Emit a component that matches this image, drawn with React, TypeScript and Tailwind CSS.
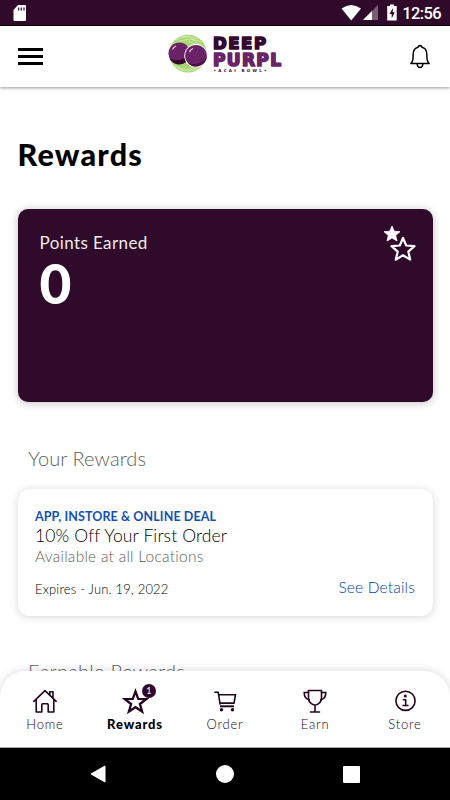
import React from "react";

interface NavItem {
  label: string;
  icon: React.ReactNode;
  active?: boolean;
  badge?: number;
}

const stroke = {
  fill: "none",
  stroke: "currentColor",
  strokeWidth: 1.6,
  strokeLinejoin: "round" as const,
  strokeLinecap: "round" as const,
};

function HomeIcon() {
  return (
    <svg width="28" height="28" viewBox="0 0 28 28" {...stroke}>
      <path d="M2.800 14.300L14 3.600l11.200 10.700M5.200 12.300V25h5.600v-7.300q0-.9.900-.9h4.600q.9 0 .9.900V25h5.600V12.300M18.800 7.800V4.800H22v6" />
    </svg>
  );
}

function StarIcon() {
  return (
    <svg width="28" height="28" viewBox="0 0 28 28" {...stroke} strokeWidth="2.300" strokeLinejoin="miter">
      <path d="M14.500 4.300l2.700 7.500 8 .3-6.300 4.900 2.200 7.500-6.600-4.300-6.600 4.300 2.200-7.500-6.300-4.900 8-.3z" />
    </svg>
  );
}

function CartIcon() {
  return (
    <svg width="28" height="28" viewBox="0 0 28 28" {...stroke} strokeLinejoin="miter" strokeLinecap="butt">
      <path d="M3.300 5.200h3.900l2 12.500M7.600 7.700h16.900l-1.500 8.400H9" />
      <path d="M9 19.300h14" strokeWidth="2" />
      <circle cx="10.500" cy="22.700" r="1.700" fill="currentColor" stroke="none" />
      <circle cx="21.500" cy="22.700" r="1.700" fill="currentColor" stroke="none" />
    </svg>
  );
}

function TrophyIcon() {
  return (
    <svg width="28" height="28" viewBox="0 0 28 28" {...stroke} strokeLinejoin="miter">
      <path d="M7.500 3.500h13v7c0 4-2.500 6.800-6.500 7.800-4-1-6.500-3.800-6.500-7.800zM14 18.500V25M9.500 25h9" />
      <path d="M7.500 5.500H3.200c0 4 1.300 6.500 5 7.300M20.500 5.500h4.300c0 4-1.300 6.500-5 7.300" />
    </svg>
  );
}

function InfoIcon() {
  return (
    <svg width="28" height="28" viewBox="0 0 28 28" {...stroke} strokeLinecap="butt">
      <circle cx="14.500" cy="13.800" r="9.600" />
      <path d="M11.800 12.700h2.900v5.600M11.500 18.500h6" />
      <circle cx="14.300" cy="9" r="1.500" fill="currentColor" stroke="none" />
    </svg>
  );
}

const navItems: NavItem[] = [
  { label: "Home", icon: <HomeIcon /> },
  { label: "Rewards", icon: <StarIcon />, active: true, badge: 1 },
  { label: "Order", icon: <CartIcon /> },
  { label: "Earn", icon: <TrophyIcon /> },
  { label: "Store", icon: <InfoIcon /> },
];

function Logo() {
  return (
    <svg width="114" height="50" viewBox="168 27 114 50">
      <circle cx="188" cy="53.700" r="18.900" fill="#a9d573" />
      <g fill="none" stroke="#d9efb8" strokeWidth=".7">
        <path d="M173 44q14-8 29-2M176 40q12-6 22-1M180 37l10-1M188 41l17 7M191 38l12 9M174 66q14 7 28 0M178 69q10 4 20 0M172 63l12 8M190 68l12-3" />
      </g>
      <circle cx="179.300" cy="53.300" r="10.800" fill="#6b2367" />
      <path d="M169.500 58.500a10.800 10.800 0 0 0 18 2l2-9c-3 8-12 11-20 7z" fill="#35092e" />
      <circle cx="196" cy="55.700" r="11.700" fill="#fff" />
      <circle cx="196" cy="55.700" r="10.800" fill="#6b2367" />
      <path d="M188 62.900a10.800 10.800 0 0 0 18.800-6.900c-3 7-11 9.500-18.800 6.900z" fill="#4a1245" />
      <path d="M172.500 49.500q1-2.500 3.500-3.500M189.500 52q1-2.500 3.500-3.500" stroke="#e3cde2" strokeWidth="1.200" fill="none" />
      <g fontFamily="DejaVu Sans" fontWeight="700" strokeLinejoin="round">
        <text x="213" y="48.700" fontSize="16.500" textLength="53" fill="#35092e" stroke="#35092e" strokeWidth="1.700">
          DEEP
        </text>
        <text x="213" y="65.500" fontSize="17" textLength="68" fill="#6b2367" stroke="#6b2367" strokeWidth="1.700">
          PURPL
        </text>
        <text x="213.500" y="72.300" fontSize="4" textLength="53" fill="#35092e">
          •ACAI BOWL•
        </text>
      </g>
    </svg>
  );
}

function StatusBar() {
  return (
    <div className="flex h-[26px] shrink-0 items-center border-b border-black bg-[#300a2a] text-white">
      <svg className="ml-3" width="16" height="20" viewBox="0 0 16 20">
        <path d="M6 2h7q1 0 1 1v14q0 1-1 1H2.500q-1 0-1-1V7z" fill="#fff" />
        <path d="M6.700 4.500v3M9.300 4.500v3M12 4.500v3" stroke="#300a2a" strokeWidth="1.200" />
      </svg>
      <svg className="mr-[3px] ml-auto" width="60" height="20" viewBox="336 3 60 20" fill="#fff">
        <path d="M338.500 8.500q9.700-7 19.500 0L348.300 20.500z" />
        <path d="M375 5v15h-15z" opacity=".35" />
        <path d="M369 11v9h-9z" />
        <path d="M387 4.500h4V6h2.700v14.500h-9.500V6h2.800z" />
        <path d="M389.800 8l-3.300 6h2.200v4.500l3.100-6.300h-2z" fill="#300a2a" />
      </svg>
      <span className="mt-[3px] mr-[9px] w-[39px] text-right font-[Roboto] text-[16.500px] leading-none font-medium tracking-[-0.600px] whitespace-nowrap">
        12:56
      </span>
    </div>
  );
}

function Header() {
  return (
    <header className="relative z-10 grid h-[61px] shrink-0 grid-cols-[1fr_auto_1fr] items-center bg-white pr-[18px] pl-[18px] shadow-[0_1px_3px_rgba(0,0,0,0.4)]">
      <button className="flex w-[25px] flex-col gap-[4px]">
        <span className="h-[3px] bg-black" />
        <span className="h-[3px] bg-black" />
        <span className="h-[3px] bg-black" />
      </button>
      <div className="-mt-[9px]">
        <Logo />
      </div>
      <svg className="mr-[1px] ml-auto" width="22" height="28" viewBox="0 0 24 28" preserveAspectRatio="none" fill="none" stroke="#000" strokeWidth="1.600" strokeLinejoin="round">
        <path d="M2 20.500q2.500-2 2.500-7v-2c0-4 2-6.500 5.500-7.200C10 2 14 2 14 4.300c3.500.7 5.500 3.200 5.500 7.200v2q0 5 2.500 7zM8.800 20.500q.4 4 3.200 4t3.200-4" />
      </svg>
    </header>
  );
}

function PointsCard({ points }: { points: number }) {
  return (
    <section className="flex h-[193px] justify-between rounded-[10px] bg-[#300a2a] pt-[22px] pr-[17px] pl-[22px] text-white shadow-[0_1px_8px_rgba(0,0,0,0.25)]">
      <div>
        <p className="text-[17px] leading-[24px] tracking-[0.400px] text-[#ececec]">Points Earned</p>
        <p className="-mt-px text-[55px] leading-[58px] font-black">{points}</p>
      </div>
      <svg className="-mt-[7px]" width="34" height="38" viewBox="382 224 34 38">
        <path d="M392 226l2.200 5.200 5.800.5-4.300 3.700 1.300 5.600-5-3-5 3 1.300-5.600-4.300-3.700 5.800-.5z" fill="#fff" stroke="#fff" strokeWidth=".8" strokeLinejoin="round" />
        <path d="M403 238l3.200 7.500 8.300.7-6.200 5.400 1.900 8-7.200-4.300-7.200 4.300 1.900-8-6.200-5.400 8.300-.7z" fill="#300a2a" stroke="#fff" strokeWidth="2.200" strokeLinejoin="round" />
      </svg>
    </section>
  );
}

function RewardCard() {
  return (
    <section className="flex h-[127px] flex-col rounded-[12px] bg-white px-[17.500px] pt-[19px] shadow-[0_1px_9px_rgba(0,0,0,0.16)]">
      <p className="text-[12.500px] leading-[17px] font-bold tracking-[0.100px] text-[#1450b0]">APP, INSTORE &amp; ONLINE DEAL</p>
      <p className="text-[17.500px] leading-[22px] font-light tracking-[0.130px] text-black">10% Off Your First Order</p>
      <p className="-mt-px text-[15.500px] leading-[20px] font-light tracking-[0.260px] text-[#606060]">Available at all Locations</p>
      <div className="mt-[9px] flex items-center justify-between">
        <span className="mt-[4px] text-[13px] leading-[20px] font-light tracking-[0.180px] text-black">Expires - Jun. 19, 2022</span>
        <a className="text-[15.500px] leading-[22px] font-light tracking-[0.180px] text-[#0040a8]">See Details</a>
      </div>
    </section>
  );
}

function BottomNav() {
  return (
    <nav className="relative z-10 grid h-[77px] shrink-0 grid-cols-5 rounded-t-[26px] border-b border-[#aaa] bg-white pt-[16px] text-[#240520] shadow-[0_0_10px_rgba(0,0,0,0.16)]">
      {navItems.map((item) => (
        <div key={item.label} className="flex flex-col items-center">
          <div className="relative">
            {item.icon}
            {item.badge && (
              <span className="absolute -top-[3px] left-[21px] flex size-[13.500px] items-center justify-center rounded-full bg-[#300a2a] text-[9px] text-white">
                {item.badge}
              </span>
            )}
          </div>
          <span className={item.active ? "text-[13px] leading-[18px] font-black tracking-[0.850px] text-black" : "text-[13px] leading-[18px] font-light tracking-[0.800px]"}>
            {item.label}
          </span>
        </div>
      ))}
    </nav>
  );
}

function SystemNav() {
  return (
    <div className="grid h-[52px] shrink-0 grid-cols-[107px_1fr_107px] items-center bg-black">
      <svg className="ml-auto" width="17" height="20" viewBox="0 0 17 20">
        <path d="M15 2v16L1 10z" fill="#fff" stroke="#fff" strokeLinejoin="round" />
      </svg>
      <span className="mx-auto size-[18px] rounded-full bg-white" />
      <span className="size-[17px] rounded-[1px] bg-white" />
    </div>
  );
}

export default function App() {
  return (
    <div className="flex h-[800px] w-[450px] flex-col overflow-hidden bg-white font-[Lato,sans-serif]">
      <StatusBar />
      <Header />
      <main className="min-h-0 flex-1 overflow-hidden px-[17.500px]">
        <h1 className="mt-[48px] text-[30.500px] leading-[38px] font-black tracking-[1.200px]">Rewards</h1>
        <div className="mt-[36px]">
          <PointsCard points={0} />
        </div>
        <h2 className="mt-[43px] mb-[17px] pl-[10.500px] text-[20px] leading-[27px] font-light tracking-[0.100px] text-[#606060]">Your Rewards</h2>
        <RewardCard />
        <h2 className="mt-[42px] pl-[10.500px] text-[20px] leading-[27px] font-light tracking-[0.250px] text-[#606060]">Earnable Rewards</h2>
      </main>
      <BottomNav />
      <SystemNav />
    </div>
  );
}
